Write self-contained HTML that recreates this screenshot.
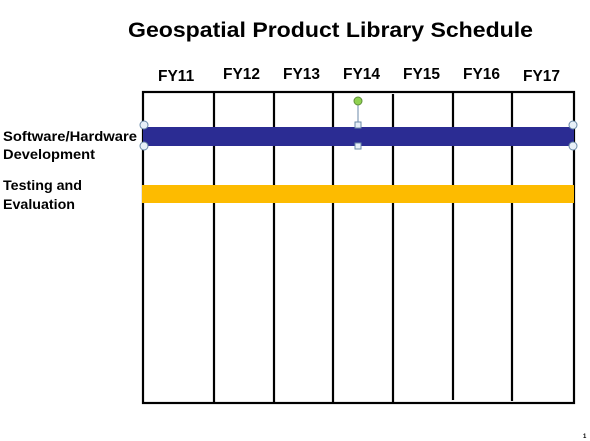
<!DOCTYPE html>
<html><head><meta charset="utf-8"><style>
html,body{margin:0;padding:0;background:#fff;}
svg{display:block;}
text{font-family:"Liberation Sans",Arial,sans-serif;font-weight:bold;fill:#000;}
</style></head><body>
<svg width="590" height="441" viewBox="0 0 590 441">
<text x="128" y="37" font-size="21" textLength="405" lengthAdjust="spacingAndGlyphs">Geospatial Product Library Schedule</text>
<g font-size="15.5">
<text x="158" y="81">FY11</text>
<text x="223" y="79">FY12</text>
<text x="283" y="79">FY13</text>
<text x="343" y="79">FY14</text>
<text x="403" y="79">FY15</text>
<text x="463" y="79">FY16</text>
<text x="523" y="81">FY17</text>
</g>
<g font-size="14">
<text x="3" y="141" textLength="134" lengthAdjust="spacingAndGlyphs">Software/Hardware</text>
<text x="3" y="159" textLength="92" lengthAdjust="spacingAndGlyphs">Development</text>
<text x="3" y="190" textLength="79" lengthAdjust="spacingAndGlyphs">Testing and</text>
<text x="3" y="209" textLength="72" lengthAdjust="spacingAndGlyphs">Evaluation</text>
</g>
<g stroke="#000" stroke-width="2.2" fill="none">
<rect x="143" y="92" width="431" height="311"/>
<line x1="214" y1="92" x2="214" y2="403"/>
<line x1="274" y1="92" x2="274" y2="403"/>
<line x1="333" y1="92" x2="333" y2="403"/>
<line x1="393" y1="94" x2="393" y2="404"/>
<line x1="453" y1="91" x2="453" y2="400"/>
<line x1="512" y1="92" x2="512" y2="401"/>
</g>
<rect x="143" y="127" width="431" height="19" fill="#2b2c93"/>
<rect x="142" y="185" width="432" height="18" fill="#fdbb00"/>
<line x1="358" y1="101" x2="358" y2="126" stroke="#6b8aa8" stroke-width="1"/>
<circle cx="358" cy="101" r="4" fill="#8fd14f" stroke="#5e8e3a" stroke-width="1"/>
<g fill="#e8f0f8" stroke="#6b8aa8" stroke-width="1">
<circle cx="144" cy="125" r="4"/><circle cx="144" cy="146" r="4"/>
<circle cx="573" cy="125" r="4"/><circle cx="573" cy="146" r="4"/>
<rect x="355" y="122" width="6" height="6"/><rect x="355" y="143" width="6" height="6"/>
</g>
<text x="583" y="438" font-size="6" font-weight="normal" fill="#999">1</text>
</svg>
</body></html>
